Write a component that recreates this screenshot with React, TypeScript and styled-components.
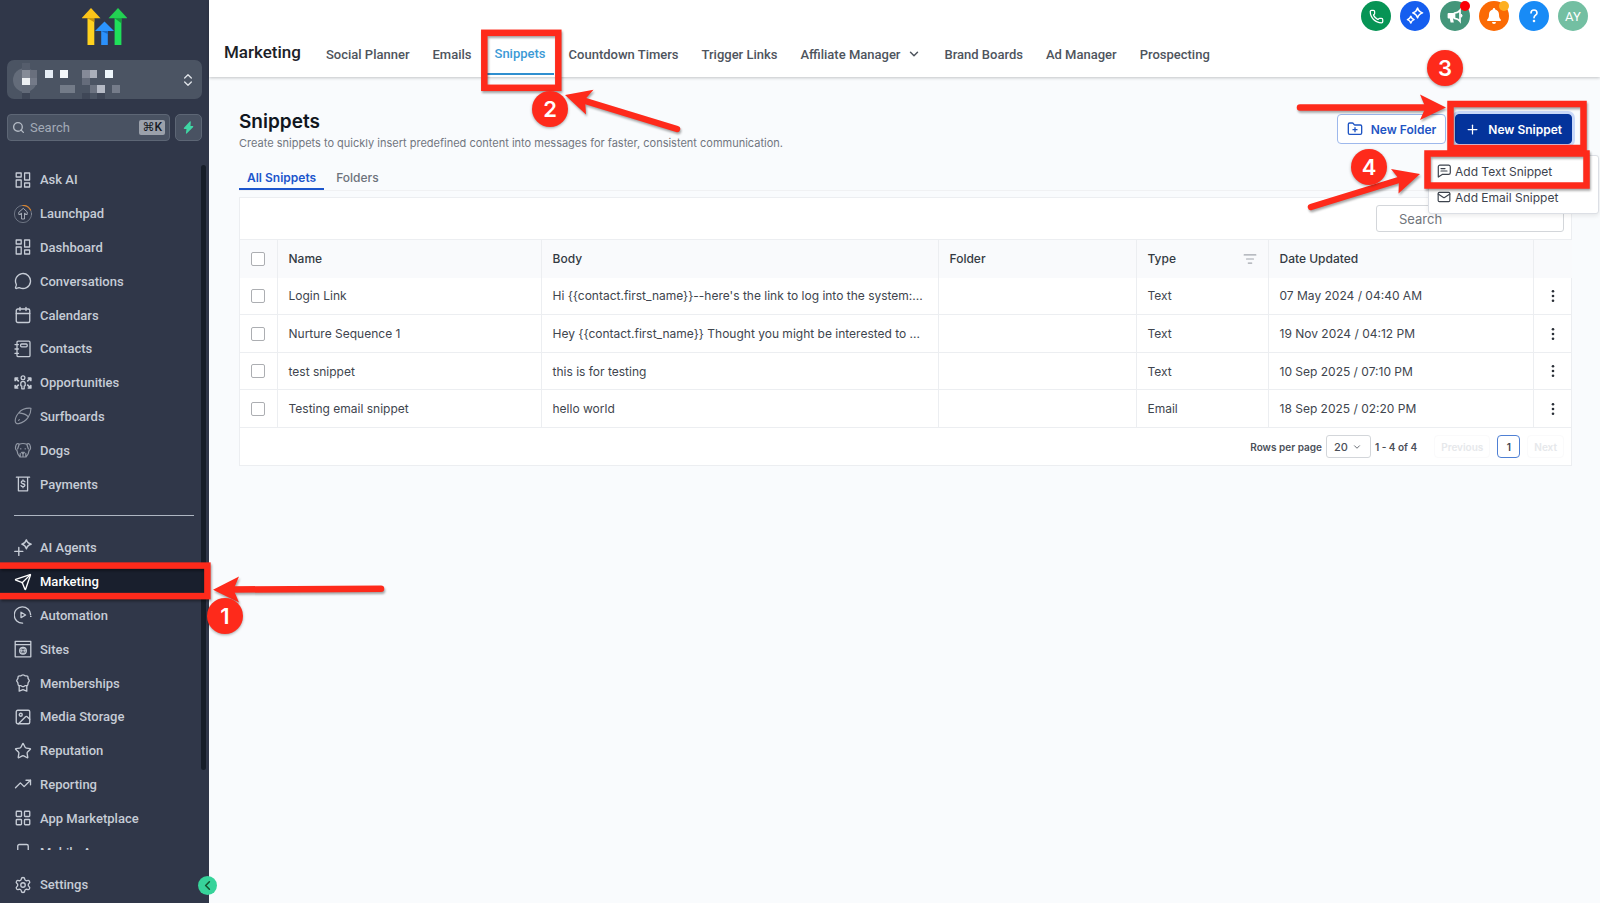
import React from "react";
import styled, { createGlobalStyle, css } from "styled-components";
import {
  Calendar,
  ChevronDown,
  ChevronLeft,
  ChevronsUpDown,
  FolderPlus,
  Image as ImageIcon,
  LayoutGrid,
  ListFilter,
  Mail,
  MessageCircle,
  Phone,
  Plus,
  Search,
  Send,
  Settings,
  Smartphone,
  Star,
  TrendingUp,
} from "lucide-react";

const Global = createGlobalStyle`
  *, *::before, *::after { box-sizing: border-box; }
  body { margin: 0; background: #f9fbfd; font-family: Inter, "Liberation Sans", sans-serif; }
  button, input, select { font: inherit; margin: 0; }
  a { color: inherit; text-decoration: none; }
`;

const red = "#fe2a1b";

/* ---------- shell ---------- */

const Shell = styled.div`
  position: relative;
  display: flex;
  min-height: 100vh;
  overflow: hidden;
`;

const Sidebar = styled.aside`
  position: relative;
  flex: none;
  display: flex;
  flex-direction: column;
  width: 209px;
  height: 100vh;
  background: #303749;
  color: #c6ccd6;
  font-family: Roboto, "Liberation Sans", sans-serif;
`;

const Main = styled.main`
  flex: 1;
  min-width: 0;
  display: flex;
  flex-direction: column;
`;

/* ---------- sidebar ---------- */

const Brand = styled.a`
  display: flex;
  justify-content: center;
  padding: 8px 0 15px;
  svg { display: block; }
`;

const AccountButton = styled.button`
  display: flex;
  align-items: center;
  justify-content: space-between;
  height: 39px;
  margin: 0 7px;
  padding: 0 6px 0 0;
  border: 0;
  border-radius: 7px;
  background: #4b5463;
  color: #dfe3e8;
`;

const SearchRow = styled.div`
  display: flex;
  gap: 5px;
  margin: 15px 7px 0;
`;

const SearchField = styled.label`
  flex: 1;
  min-width: 0;
  display: flex;
  align-items: center;
  gap: 5px;
  height: 27px;
  padding: 0 4px;
  border: 1px solid #5d6675;
  border-radius: 4px;
  background: #495262;
  color: #b3bac4;
  input {
    flex: 1;
    min-width: 0;
    padding: 0;
    border: 0;
    background: none;
    font-size: 13px;
    outline: 0;
  }
  input::placeholder { color: #a3abb7; opacity: 1; }
`;

const Key = styled.kbd`
  padding: 0 3px;
  border-radius: 2px;
  background: #9ba1ab;
  color: #14181f;
  font: 500 12px/15px Roboto, "DejaVu Sans", sans-serif;
`;

const BoltButton = styled.button`
  display: grid;
  place-items: center;
  width: 27px;
  height: 27px;
  padding: 0;
  border: 1px solid #5d6675;
  border-radius: 5px;
  background: #495262;
`;

const Nav = styled.nav`
  flex: 1;
  min-height: 0;
  margin-top: 22px;
  overflow: hidden;
`;

const NavGroup = styled.div`
  display: grid;
  grid-template-rows: repeat(10, 1fr);
  height: 338px;
`;

const NavItem = styled.a<{ $active?: boolean }>`
  display: flex;
  align-items: center;
  gap: 8px;
  min-height: 33px;
  padding: 0 14px;
  font-size: 13px;
  font-weight: 500;
  svg { flex: none; }
  ${(p) => p.$active && css`
    background: #191f2d;
    color: #fff;
  `}
`;

const Divider = styled.hr`
  height: 1px;
  margin: 14px 15px 15px 14px;
  border: 0;
  background: #aeb6c2;
`;

const SidebarFoot = styled.div`
  display: grid;
  padding: 18px 0 2px;
`;

const ScrollThumb = styled.span`
  position: absolute;
  top: 165px;
  right: 3px;
  bottom: 133px;
  width: 5px;
  border-radius: 3px;
  background: #171e29;
`;

const Collapse = styled.button`
  position: absolute;
  right: -8px;
  bottom: 8px;
  z-index: 2;
  display: grid;
  place-items: center;
  width: 19px;
  height: 19px;
  padding: 0;
  border: 0;
  border-radius: 50%;
  background: #37d39a;
  color: #14532d;
`;

/* ---------- header ---------- */

const Header = styled.header`
  position: relative;
  background: #fff;
  box-shadow: 0 1px 3px rgba(0, 0, 0, 0.22);
  font-family: Roboto, "Liberation Sans", sans-serif;
`;

const Tools = styled.div`
  display: flex;
  justify-content: space-between;
  width: 227px;
  margin: 0 12px 0 auto;
  padding-top: 1px;
`;

const ToolButton = styled.button<{ $bg: string; $dot?: string }>`
  position: relative;
  display: grid;
  place-items: center;
  width: 30px;
  height: 30px;
  padding: 0;
  border: 0;
  border-radius: 50%;
  background: ${(p) => p.$bg};
  color: #fff;
  font-size: 13px;
  ${(p) => p.$dot && css`
    &::after {
      content: "";
      position: absolute;
      top: 0;
      right: 0;
      width: 10px;
      height: 10px;
      border-radius: 50%;
      background: ${p.$dot};
    }
  `}
`;

const TabBar = styled.div`
  display: flex;
  align-items: stretch;
  gap: 7px;
  height: 46px;
  padding-left: 15px;
`;

const Section = styled.h2`
  margin: 0 10px 0 0;
  font-size: 17px;
  font-weight: 500;
  line-height: 43px;
  color: #1c2127;
`;

const Tab = styled.a<{ $active?: boolean }>`
  display: flex;
  align-items: center;
  gap: 7px;
  padding: 2px 8px 0;
  border-bottom: 2px solid transparent;
  font-size: 13px;
  font-weight: 500;
  white-space: nowrap;
  color: #4e545d;
  ${(p) => p.$active && css`
    margin-bottom: 2px;
    border-color: #2f8fd0;
    color: #3b9ad6;
  `}
`;

/* ---------- page ---------- */

const Page = styled.div`
  padding: 33px 28px 0 30px;
`;

const PageHead = styled.div`
  display: flex;
  justify-content: space-between;
  align-items: flex-start;
`;

const Title = styled.h1`
  margin: 0;
  font-size: 19px;
  font-weight: 600;
  line-height: 24px;
  color: #101620;
`;

const Lead = styled.p`
  margin: 1px 0 0;
  font-size: 11px;
  line-height: 16px;
  color: #71767f;
`;

const Actions = styled.div`
  position: relative;
  display: flex;
  gap: 9px;
  margin-top: 4px;
`;

const Button = styled.button<{ $primary?: boolean }>`
  display: flex;
  align-items: center;
  gap: 8px;
  height: 30px;
  padding: 0 9px;
  border: 1px solid #9db8ec;
  border-radius: 4px;
  background: #fff;
  color: #1f55c4;
  font-size: 12px;
  font-weight: 600;
  white-space: nowrap;
  ${(p) => p.$primary && css`
    border-color: #04339b;
    background: #04339b;
    color: #fff;
    box-shadow: 0 0 0 3px #c9d8f8;
  `}
`;

const Menu = styled.div`
  position: absolute;
  top: 41px;
  right: -27px;
  z-index: 1;
  display: grid;
  width: 171px;
  padding: 2px 0 3px;
  border: 1px solid #dcdfe5;
  border-radius: 3px;
  background: #fff;
  box-shadow: 0 2px 4px rgba(0, 0, 0, 0.08);
`;

const MenuItem = styled.button`
  display: flex;
  align-items: center;
  gap: 4px;
  height: 26px;
  padding: 0 8px;
  border: 0;
  background: none;
  color: #3d434d;
  font-size: 12px;
`;

const SubTabs = styled.div`
  display: flex;
  gap: 4px;
  margin-top: 16px;
  border-bottom: 1px solid #f0f1f3;
`;

const SubTab = styled.button<{ $active?: boolean }>`
  height: 23px;
  padding: 0 8px;
  border: 0;
  border-bottom: 2px solid transparent;
  background: none;
  font-size: 12px;
  font-weight: 500;
  color: #6d727b;
  ${(p) => p.$active && css`
    border-color: #1c55cc;
    font-weight: 600;
    color: #1c55cc;
  `}
`;

const Card = styled.section`
  margin-top: 6px;
  border: 1px solid #eceef1;
  background: #fff;
`;

const CardTools = styled.div`
  display: flex;
  justify-content: flex-end;
  padding: 7px;
`;

const TableSearch = styled.input`
  width: 188px;
  height: 27px;
  padding: 0 22px;
  border: 1px solid #d3d6da;
  border-radius: 3px;
  background: #fff;
  font-size: 13px;
  &::placeholder { color: #71757c; opacity: 1; }
`;

const Table = styled.table`
  width: 100%;
  table-layout: fixed;
  border-collapse: collapse;
  font-size: 12px;
  color: #40454e;
  th, td {
    padding: 0 11px;
    text-align: left;
    white-space: nowrap;
    overflow: hidden;
    border-left: 1px solid #eceef1;
  }
  th:first-child, td:first-child { border-left: 0; }
  th {
    height: 38px;
    border-top: 1px solid #eceef1;
    background: #f9fafc;
    font-weight: 500;
    color: #343a43;
  }
  td {
    height: 37px;
    border-bottom: 1px solid #eceef1;
  }
  tbody tr:nth-child(even) td { height: 38px; }
  th:last-child, td:last-child { padding: 0; }
`;

const HeadCell = styled.span`
  display: flex;
  justify-content: space-between;
  align-items: center;
  svg { color: #a2a6ad; }
`;

const Check = styled.input`
  appearance: none;
  display: block;
  width: 14px;
  height: 14px;
  border: 1px solid #acaeb2;
  border-radius: 2px;
  background: #fff;
`;

const IconButton = styled.button`
  display: grid;
  place-items: center;
  padding: 0;
  border: 0;
  background: none;
  color: #2a2f37;
`;

const RowMenuButton = styled(IconButton)`
  width: 100%;
  height: 20px;
`;

const Pager = styled.div`
  display: flex;
  align-items: center;
  justify-content: flex-end;
  height: 37px;
  padding-right: 7px;
  font-size: 10px;
  font-weight: 600;
  color: #4b5059;
`;

const SizeSelect = styled.span`
  display: grid;
  align-items: center;
  margin: 0 4px;
  select, svg { grid-area: 1 / 1; }
  svg { justify-self: end; margin-right: 9px; pointer-events: none; }
  select {
    appearance: none;
    width: 45px;
    height: 23px;
    padding: 0 7px;
    border: 1px solid #d3d6da;
    border-radius: 3px;
    background: #fff;
    color: inherit;
    font-size: 11px;
    font-weight: 500;
  }
`;

const PageButton = styled.button<{ $current?: boolean }>`
  height: 23px;
  padding: 0 6px;
  margin-left: 7px;
  border: 1px solid #fafafb;
  border-radius: 4px;
  background: #fff;
  color: #e6e8eb;
  ${(p) => p.$current && css`
    width: 23px;
    padding: 0;
    border-color: #4f80d4;
    color: #40454e;
  `}
`;

const Count = styled.span`
  margin-right: 10px;
`;

/* ---------- callouts ---------- */

const Callouts = styled.div<{ $side: "left" | "right" }>`
  position: absolute;
  top: 0;
  ${(p) => p.$side}: 0;
  z-index: 5;
  width: 700px;
  height: 640px;
  pointer-events: none;
  svg {
    display: block;
    filter: drop-shadow(1px 2px 1px rgba(0, 0, 0, 0.35));
  }
`;

const Badge = styled.span<{ $x: number; $y: number }>`
  position: absolute;
  left: ${(p) => p.$x}px;
  top: ${(p) => p.$y}px;
  display: grid;
  place-items: center;
  width: 36px;
  height: 36px;
  border-radius: 50%;
  background: ${red};
  box-shadow: 0 1px 3px rgba(0, 0, 0, 0.35);
  color: #fff;
  font: 600 22px/36px Inter, sans-serif;
`;

/* ---------- icons ---------- */

const Glyph = ({ children, dim }: { children: React.ReactNode; dim?: boolean }) => (
  <svg width="18" height="18" viewBox="0 0 18 18" fill="none" stroke="currentColor" strokeWidth="1.3" strokeLinecap="round" strokeLinejoin="round" opacity={dim ? 0.65 : 1} aria-hidden="true">
    {children}
  </svg>
);

const DashboardIcon = () => (
  <Glyph>
    <path d="M2.2 2h5v4h-5zM10.6 2h5v7h-5zM2.2 9h5v7h-5zM10.6 12h5v4h-5z" />
  </Glyph>
);

const LaunchpadIcon = () => (
  <Glyph>
    <circle cx="9" cy="9" r="8.6" strokeWidth="1" opacity="0.4" />
    <path d="M9 .4a8.6 8.6 0 0 1 7.6 4.6" stroke="#d9822b" strokeWidth="1.1" />
    <path d="M9 3.6 4.8 7.3v2.2h2V8.2h.7V14h3V8.2h.7v1.3h2V7.3z" strokeWidth="1" opacity="0.75" />
  </Glyph>
);

const ContactsIcon = () => (
  <Glyph>
    <rect x="3" y="1.2" width="13" height="15.4" rx="1.2" />
    <rect x="6.6" y="4" width="6.6" height="2.8" rx="1" />
    <path d="M1 4.6h3.4M1 9h3.4M1 13.4h3.4" />
  </Glyph>
);

const OpportunitiesIcon = () => (
  <Glyph>
    <circle cx="9" cy="3.8" r="1.9" />
    <path d="M9 7.4c-1.5 0-2.2.9-2.2 2.2v2l1 .5v2.7h2.4v-2.7l1-.5v-2c0-1.3-.7-2.2-2.2-2.2z" />
    <path d="M1.2 6.4V4h2.4M1.5 4.3l2.8 2.6M16.8 6.4V4h-2.4M16.5 4.3l-2.8 2.6M1.2 11.6V14h2.4M1.5 13.7l2.8-2.6M16.8 11.6V14h-2.4M16.5 13.7l-2.8-2.6" strokeWidth="1.7" />
  </Glyph>
);

const SurfboardIcon = () => (
  <Glyph dim>
    <path d="M17 1.2c-4.6-.4-9 .8-12 4.3C2.6 8.3 1.2 11.8 1.2 14c0 2 1.6 3 3.6 2.6 3.6-.8 7.2-3 9.3-6.2 1.9-2.8 2.9-6 2.9-9.2zM5 6c3 .4 6.5.2 9.3 3.8M4.6 13.4l.8-.8" strokeWidth="1.1" />
  </Glyph>
);

const DogIcon = () => (
  <Glyph dim>
    <path d="M5.2 3.2C3.6 1.8 2.2 2.6 1.6 5.6c-.4 2 .2 3.6 1.3 3.7l1 3.7 2 3h6.2l2-3 1-3.7c1.1-.1 1.7-1.7 1.3-3.7-.6-3-2-3.8-3.6-2.4-2.2-.8-5.4-.8-7.6 0zM5.2 3.2 3.6 8M12.8 3.2 14.4 8M6.8 7.6v.4M11.2 7.6v.4M7.6 11.4h2.8L9 13zM9 13v2.4M6.2 12.4v3M11.8 12.4v3" strokeWidth="1.2" />
  </Glyph>
);

const PaymentsIcon = () => (
  <Glyph>
    <path d="M2.4 2.2h13.2M4.4 2.4v13.4h9.2V2.4" />
    <path d="M10.9 6.8c-.3-.6-1-.9-1.9-.9-1 0-1.8.5-1.8 1.4 0 1.9 3.7 1 3.7 2.9 0 .9-.8 1.4-1.9 1.4-.9 0-1.7-.4-2-1M9 4.9v1M9 11.7v1" />
  </Glyph>
);

const AgentsIcon = () => (
  <Glyph>
    <path d="M12.4.8c.7 2.7 1.7 3.7 4.8 4.4-3.1.8-4.1 1.8-4.8 4.6-.8-2.8-1.8-3.8-4.6-4.6 2.8-.7 3.8-1.7 4.6-4.4zM4.8 8.4v8M.8 12.4h8" strokeWidth="1.4" />
  </Glyph>
);

const AutomationIcon = () => (
  <Glyph>
    <path d="M8.6 17.2A8.2 8.2 0 1 1 16.6 8.6" />
    <path d="M7 6.2v5.4L11.6 9zM17 10.4h-.4" />
  </Glyph>
);

const SitesIcon = () => (
  <Glyph>
    <path d="M1.2 1.4h15.6v15.4H1.2zM1.2 4.6h15.6" />
    <circle cx="9" cy="10.8" r="3.3" />
    <path d="M5.7 10.8h6.6M9 7.5c-2 2-2 4.6 0 6.6 2-2 2-4.6 0-6.6z" strokeWidth="1" />
  </Glyph>
);

const AwardIcon = () => (
  <Glyph>
    <path d="M9 .8c.9 0 1.4.9 2.2 1 .9.1 1.800-.2 2.400.4s.3 1.500.5 2.300c.2.8 1.200 1.300 1.200 2.200s-1 1.400-1.200 2.200c-.2.8.1 1.700-.5 2.300s-1.500.3-2.400.5c-.8.1-1.300 1-2.200 1s-1.400-.9-2.200-1c-.9-.2-1.800.1-2.400-.5s-.3-1.500-.5-2.300c-.2-.8-1.200-1.300-1.200-2.200s1-1.400 1.200-2.200c.2-.8-.1-1.700.5-2.300s1.500-.3 2.400-.4c.8-.1 1.300-1 2.200-1z" />
    <path d="M5.2 12v5.200L9 15.600l3.800 1.600V12" />
  </Glyph>
);

const Logo = () => (
  <svg width="45" height="37" viewBox="0 0 45 37" aria-label="Home">
    <path d="M9 0l9.5 10.2h-19z" fill="#fcc419" />
    <path d="M5.5 10.2h6.8V37H5.5z" fill="#ffd21f" />
    <path d="M5.5 10.2h6.8v4z" fill="#c9930a" />
    <path d="M36 0l9.5 10.2h-19z" fill="#22d152" />
    <path d="M32.6 10.2h6.8V37h-6.8z" fill="#1fe05a" />
    <path d="M32.6 10.2h6.8v5z" fill="#149c3c" />
    <path d="M22.5 13.5L32 23H13z" fill="#2b95ff" />
    <path d="M19.2 23h6.6v14h-6.6z" fill="#2b90fb" />
    <path d="M19.2 23h6.6v3z" fill="#1768c4" />
  </svg>
);

/* Account name and picture, shown as a coarse mosaic for privacy. */
const mosaic: [number, number, number, number, string][] = [
  [15, 10, 8, 8, "#858b97"], [23, 10, 7, 8, "#696f7d"], [15, 18, 8, 7, "#edf0f3"], [23, 18, 7, 7, "#747a88"],
  [15, 3, 8, 7, "#555d6c"], [15, 25, 8, 8, "#626a78"],
  [38, 10, 8, 8, "#e6edf5"], [53, 10, 8, 8, "#f4f7fa"], [75, 10, 8, 8, "#858a98"], [83, 10, 7, 8, "#abb0bb"],
  [98, 10, 8, 8, "#eef6fb"], [75, 18, 8, 7, "#656c7b"], [53, 25, 15, 8, "#737b88"], [83, 25, 7, 8, "#6c7381"],
  [90, 25, 8, 8, "#b5bac5"], [105, 25, 8, 8, "#757c8a"], [15, 33, 8, 6, "#3e4656"], [75, 33, 8, 6, "#3f4757"], [90, 33, 8, 6, "#3e4656"],
];

const AccountMosaic = () => (
  <svg width="130" height="39" viewBox="0 0 130 39" aria-hidden="true">
    <circle cx="18" cy="20" r="12" fill="#646c7a" />
    {mosaic.map(([x, y, w, h, fill]) => (
      <rect key={`${x}-${y}`} x={x} y={y} width={w} height={h} fill={fill} />
    ))}
  </svg>
);

const Sparkles = () => (
  <svg width="18" height="18" viewBox="0 0 18 18" fill="none" stroke="#fff" strokeWidth="1.5" strokeLinejoin="round" aria-hidden="true">
    <path d="M11.6 1c.8 2.9 1.900 4 5 4.900-3.100.9-4.200 2-5 5-.8-3-1.900-4.100-4.900-5 3-.9 4.100-2 4.900-4.900zM4.800 9.200c.6 2 1.300 2.700 3.300 3.400-2 .6-2.700 1.400-3.300 3.400-.6-2-1.400-2.800-3.400-3.400 2-.7 2.800-1.400 3.400-3.400z" />
  </svg>
);

const Megaphone = () => (
  <svg width="16" height="16" viewBox="0 0 16 16" aria-hidden="true">
    <path d="M1.5 5H7v5.500H6l.8 4H3.600l-.8-4H1.500A1 1 0 0 1 .6 9.600V5.900A1 1 0 0 1 1.500 5z" fill="#fff" />
    <path d="M7.5 5.200C10 5 12 3.600 13 2.200v11C12 11.800 10 10.500 7.500 10.300z" fill="none" stroke="#fff" strokeWidth="1.7" />
    <path d="M14 6.200a1.600 1.600 0 0 1 0 3z" fill="#fff" stroke="#fff" />
  </svg>
);

const Bell = () => (
  <svg width="16" height="18" viewBox="0 0 16 18" fill="#fff" aria-hidden="true">
    <path d="M8 1a1.200 1.200 0 0 1 1.200 1.200v.4C11.600 3.200 13 5 13 7.500c0 3 .8 4.200 1.700 5 .6.600.2 1.500-.6 1.500H1.900c-.8 0-1.200-.9-.6-1.500.9-.8 1.700-2 1.700-5C3 5 4.400 3.200 6.800 2.600v-.4A1.200 1.200 0 0 1 8 1zM6 15h4a2 2 0 0 1-4 0z" />
  </svg>
);

const Question = () => (
  <svg width="14" height="16" viewBox="0 0 14 16" fill="none" stroke="#fff" strokeWidth="1.6" strokeLinecap="round" aria-hidden="true">
    <path d="M4 5a3 3 0 0 1 6 0c0 2.200-3 2.300-3 4.800" />
    <circle cx="7" cy="13" r="0.5" fill="#fff" />
  </svg>
);

const TextBubble = () => (
  <svg width="14" height="14" viewBox="0 0 14 14" fill="none" stroke="currentColor" strokeWidth="1.2" strokeLinecap="round" strokeLinejoin="round" aria-hidden="true">
    <path d="M3 1.2h8.6a1.700 1.700 0 0 1 1.700 1.700v5.800a1.700 1.700 0 0 1-1.700 1.700H5.200L1.300 13V2.900A1.700 1.700 0 0 1 3 1.200zM4 4.600h4M4 7h6" />
  </svg>
);

const Kebab = () => (
  <svg width="4" height="14" viewBox="0 0 4 14" fill="currentColor" aria-hidden="true">
    <circle cx="2" cy="2.2" r="1.3" />
    <circle cx="2" cy="7" r="1.3" />
    <circle cx="2" cy="11.8" r="1.3" />
  </svg>
);

/* ---------- data ---------- */

const icon = { size: 18, strokeWidth: 1.8 };

const primaryNav: [string, React.ReactNode][] = [
  ["Ask AI", <DashboardIcon />],
  ["Launchpad", <LaunchpadIcon />],
  ["Dashboard", <DashboardIcon />],
  ["Conversations", <MessageCircle {...icon} />],
  ["Calendars", <Calendar {...icon} />],
  ["Contacts", <ContactsIcon />],
  ["Opportunities", <OpportunitiesIcon />],
  ["Surfboards", <SurfboardIcon />],
  ["Dogs", <DogIcon />],
  ["Payments", <PaymentsIcon />],
];

const secondaryNav: [string, React.ReactNode][] = [
  ["AI Agents", <AgentsIcon />],
  ["Marketing", <Send {...icon} />],
  ["Automation", <AutomationIcon />],
  ["Sites", <SitesIcon />],
  ["Memberships", <AwardIcon />],
  ["Media Storage", <ImageIcon {...icon} />],
  ["Reputation", <Star {...icon} />],
  ["Reporting", <TrendingUp {...icon} />],
  ["App Marketplace", <LayoutGrid {...icon} />],
  ["Mobile App", <Smartphone {...icon} />],
];

const tabs = ["Social Planner", "Emails", "Snippets", "Countdown Timers", "Trigger Links", "Affiliate Manager", "Brand Boards", "Ad Manager", "Prospecting"];

const columns = [37, 264, 397, 198, 132, 265, 39];

const rows = [
  ["Login Link", "Hi {{contact.first_name}}--here's the link to log into the system:...", "Text", "07 May 2024 / 04:40 AM"],
  ["Nurture Sequence 1", "Hey {{contact.first_name}} Thought you might be interested to ...", "Text", "19 Nov 2024 / 04:12 PM"],
  ["test snippet", "this is for testing", "Text", "10 Sep 2025 / 07:10 PM"],
  ["Testing email snippet", "hello world", "Email", "18 Sep 2025 / 02:20 PM"],
];

export default function App() {
  return (
    <Shell>
      <Global />
      <Sidebar>
        <Brand href="#home"><Logo /></Brand>
        <AccountButton aria-label="Switch account">
          <AccountMosaic />
          <ChevronsUpDown size={16} strokeWidth={2} />
        </AccountButton>
        <SearchRow>
          <SearchField>
            <Search size={13} strokeWidth={2.5} />
            <input placeholder="Search" aria-label="Search" />
            <Key>⌘K</Key>
          </SearchField>
          <BoltButton aria-label="Quick actions">
            <svg width="11" height="13" viewBox="0 0 11 13" fill="#3fd6a4"><path d="M6.8.5 1 6.800c-.5.600-.2 1.200.5 1.200h2l-.6 4.200c0 .5.500.6.800.3L10 6.200c.5-.6.2-1.200-.5-1.200h-2l.3-4.200c0-.5-.6-.7-1-.3z" /></svg>
          </BoltButton>
        </SearchRow>
        <Nav>
          <NavGroup>
            {primaryNav.map(([label, glyph]) => (
              <NavItem href="#" key={label}>{glyph}{label}</NavItem>
            ))}
          </NavGroup>
          <Divider />
          <NavGroup>
            {secondaryNav.map(([label, glyph]) => (
              <NavItem href="#" key={label} $active={label === "Marketing"}>{glyph}{label}</NavItem>
            ))}
          </NavGroup>
        </Nav>
        <SidebarFoot>
          <NavItem href="#settings"><Settings {...icon} />Settings</NavItem>
        </SidebarFoot>
        <ScrollThumb />
        <Collapse aria-label="Collapse sidebar"><ChevronLeft size={15} strokeWidth={2.5} /></Collapse>
      </Sidebar>

      <Main>
        <Header>
          <Tools>
            <ToolButton $bg="#079455" aria-label="Call"><Phone size={15} strokeWidth={2} /></ToolButton>
            <ToolButton $bg="#155eef" aria-label="Assistant"><Sparkles /></ToolButton>
            <ToolButton $bg="#44967a" $dot="#fb0007" aria-label="Announcements"><Megaphone /></ToolButton>
            <ToolButton $bg="#fb6a04" $dot="#fdb022" aria-label="Notifications"><Bell /></ToolButton>
            <ToolButton $bg="#188bf6" aria-label="Help"><Question /></ToolButton>
            <ToolButton $bg="#73bfa2" aria-label="Profile">AY</ToolButton>
          </Tools>
          <TabBar>
            <Section>Marketing</Section>
            {tabs.map((tab) => (
              <Tab href="#" key={tab} $active={tab === "Snippets"}>
                {tab}
                {tab === "Affiliate Manager" && <ChevronDown size={14} strokeWidth={2.5} />}
              </Tab>
            ))}
          </TabBar>
        </Header>

        <Page>
          <PageHead>
            <div>
              <Title>Snippets</Title>
              <Lead>Create snippets to quickly insert predefined content into messages for faster, consistent communication.</Lead>
            </div>
            <Actions>
              <Button><FolderPlus size={16} strokeWidth={2} />New Folder</Button>
              <Button $primary><Plus size={15} strokeWidth={2} />New Snippet</Button>
              <Menu>
                <MenuItem><TextBubble />Add Text Snippet</MenuItem>
                <MenuItem><Mail size={14} strokeWidth={2} />Add Email Snippet</MenuItem>
              </Menu>
            </Actions>
          </PageHead>

          <SubTabs>
            <SubTab $active>All Snippets</SubTab>
            <SubTab>Folders</SubTab>
          </SubTabs>

          <Card>
            <CardTools>
              <TableSearch placeholder="Search" aria-label="Search snippets" />
            </CardTools>
            <Table>
              <colgroup>
                {columns.map((width, i) => <col key={i} width={width} />)}
              </colgroup>
              <thead>
                <tr>
                  <th><Check type="checkbox" aria-label="Select all" /></th>
                  <th>Name</th>
                  <th>Body</th>
                  <th>Folder</th>
                  <th><HeadCell>Type<IconButton aria-label="Filter by type"><ListFilter size={14} strokeWidth={2} /></IconButton></HeadCell></th>
                  <th>Date Updated</th>
                  <th aria-label="Actions" />
                </tr>
              </thead>
              <tbody>
                {rows.map(([name, body, type, date]) => (
                  <tr key={name}>
                    <td><Check type="checkbox" aria-label={`Select ${name}`} /></td>
                    <td>{name}</td>
                    <td>{body}</td>
                    <td />
                    <td>{type}</td>
                    <td>{date}</td>
                    <td><RowMenuButton aria-label={`Actions for ${name}`}><Kebab /></RowMenuButton></td>
                  </tr>
                ))}
              </tbody>
            </Table>
            <Pager>
              <label htmlFor="page-size">Rows per page</label>
              <SizeSelect>
                <select id="page-size" defaultValue="20"><option>20</option><option>50</option></select>
                <ChevronDown size={10} strokeWidth={2} />
              </SizeSelect>
              <Count>1 - 4 of 4</Count>
              <PageButton disabled>Previous</PageButton>
              <PageButton $current>1</PageButton>
              <PageButton disabled>Next</PageButton>
            </Pager>
          </Card>
        </Page>
      </Main>

      <Callouts $side="left">
        <svg width="700" height="640" viewBox="0 0 700 640" fill="none" stroke={red} strokeWidth="6.5" strokeLinecap="round">
          <rect x="-4" y="565.6" width="211.4" height="30.5" />
          <path d="M381 588.8 230 589.5" />
          <path d="M213 589.8l26-13.3-5.500 13 5.500 13z" fill={red} stroke="none" />
          <rect x="484.3" y="32.8" width="74" height="55" />
          <path d="M677 129 582 100" />
          <path d="M565 95l28.500-5.200-8.500 9.800 1 14.900z" fill={red} stroke="none" />
        </svg>
        <Badge $x={207} $y={598}>1</Badge>
        <Badge $x={532} $y={91}>2</Badge>
      </Callouts>
      <Callouts $side="right">
        <svg width="700" height="640" viewBox="900 0 700 640" fill="none" stroke={red} strokeWidth="6.5" strokeLinecap="round">
          <rect x="1450.5" y="104" width="133" height="44" />
          <rect x="1427.5" y="153.5" width="159" height="32" />
          <path d="M1300 107.5h128" />
          <path d="M1446 107.5l-26-13 5.500 13-5.500 12.500z" fill={red} stroke="none" />
          <path d="M1311 207 1402 179" />
          <path d="M1420 174l-29-5 8 10-.5 14.500z" fill={red} stroke="none" />
        </svg>
        <Badge $x={527} $y={50}>3</Badge>
        <Badge $x={451} $y={149}>4</Badge>
      </Callouts>
    </Shell>
  );
}
